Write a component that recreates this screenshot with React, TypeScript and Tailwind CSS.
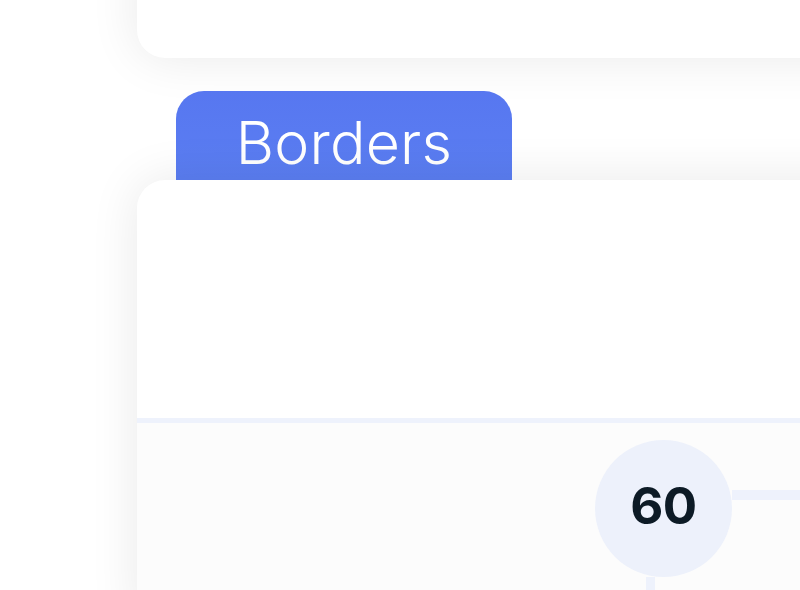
import React from 'react';

const font = { fontFamily: 'Inter, "Noto Sans", sans-serif' };

// Node of the tree diagram with its two connectors
const Node = ({ value }: { value: number }) => (
  <div className="flex flex-col">
    <div className="flex">
      <div className="w-[137px] h-[137px] shrink-0 rounded-full bg-[#edf1fb] flex items-center justify-center pb-[6px]">
        <span className="text-[51px] leading-none font-bold text-[#0d1b26] tracking-[-0.5px]">{value}</span>
      </div>
      <div className="flex-1 h-[10px] mt-[50px] bg-[#eef2fc]" />
    </div>
    <div className="ml-[51px] w-[9px] h-[40px] bg-[#eef2fc]" />
  </div>
);

export default function App() {
  return (
    <div className="w-[800px] h-[590px] overflow-hidden bg-white" style={font}>
      <div className="flex flex-col pl-[137px] w-[900px]">
        <div className="h-[98px] shrink-0 -mt-[40px] rounded-b-[28px] bg-white shadow-[0_0_50px_rgba(0,0,0,0.09)]" />

        <div className="mt-[33px] ml-[39px] w-[336px] h-[89px] shrink-0 rounded-t-[28px] bg-gradient-to-b from-[#5777f0] to-[#5b7ef2] flex justify-center pt-[22px]">
          <span className="text-[59px] leading-none font-light text-white tracking-[0.2px]">Borders</span>
        </div>

        <div className="h-[440px] shrink-0 rounded-tl-[28px] bg-white shadow-[0_0_50px_rgba(0,0,0,0.09)] flex flex-col">
          <div className="h-[238px] shrink-0" />
          <div className="h-[5px] shrink-0 bg-[#eef2fc]" />
          <div className="flex-1 bg-[#fcfcfc] pt-[17px] pl-[458px]">
            <Node value={60} />
          </div>
        </div>
      </div>
    </div>
  );
}
